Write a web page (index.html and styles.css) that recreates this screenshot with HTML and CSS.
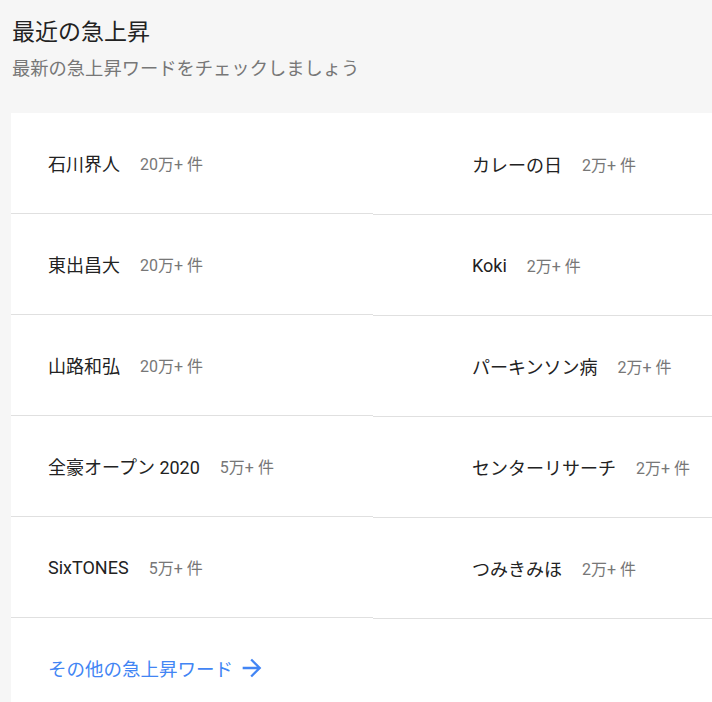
FILE: index.html
```html
<!DOCTYPE html>
<html lang="ja">
<head>
<meta charset="utf-8">
<title>最近の急上昇</title>
<link rel="stylesheet" href="styles.css">
</head>
<body>
<header class="header">
  <h1 class="title">最近の急上昇</h1>
  <p class="subtitle">最新の急上昇ワードをチェックしましょう</p>
</header>
<main class="card">
  <div class="col col-left">
    <div class="item"><span class="term">石川界人</span><span class="count">20万+ 件</span></div>
    <div class="item"><span class="term">東出昌大</span><span class="count">20万+ 件</span></div>
    <div class="item"><span class="term">山路和弘</span><span class="count">20万+ 件</span></div>
    <div class="item"><span class="term">全豪オープン 2020</span><span class="count">5万+ 件</span></div>
    <div class="item"><span class="term">SixTONES</span><span class="count">5万+ 件</span></div>
    <div class="more">
      <a class="more-link" href="#">その他の急上昇ワード
        <svg class="arrow" viewBox="0 0 24 24" width="28" height="28"><path d="M12 4l-1.41 1.41L16.17 11H4v2h12.17l-5.58 5.59L12 20l8-8z" fill="#4285f4"/></svg>
      </a>
    </div>
  </div>
  <div class="col col-right">
    <div class="item"><span class="term">カレーの日</span><span class="count">2万+ 件</span></div>
    <div class="item"><span class="term">Koki</span><span class="count">2万+ 件</span></div>
    <div class="item"><span class="term">パーキンソン病</span><span class="count">2万+ 件</span></div>
    <div class="item"><span class="term">センターリサーチ</span><span class="count">2万+ 件</span></div>
    <div class="item"><span class="term">つみきみほ</span><span class="count">2万+ 件</span></div>
  </div>
</main>
</body>
</html>
```

FILE: styles.css
```css
html, body {
  margin: 0;
  padding: 0;
  background: #f6f6f6;
  overflow: hidden;
  font-family: Roboto, "Noto Sans CJK JP", sans-serif;
}

.header {
  padding: 19px 12px 0 12px;
}

.title {
  margin: 0;
  font-size: 23px;
  line-height: 28px;
  font-weight: 400;
  color: #222;
}

.subtitle {
  margin: 10px 0 0 0;
  font-size: 18.3px;
  line-height: 24px;
  color: #777;
}

.card {
  margin: 32px 0 0 11px;
  background: #fff;
  display: grid;
  grid-template-columns: 362px 1fr;
  min-height: 600px;
}

.col {
  display: flex;
  flex-direction: column;
}

.col-right {
  padding-top: 1px;
}

.item {
  height: 100px;
  border-bottom: 1px solid #e0e0e0;
  display: flex;
  align-items: center;
  gap: 20px;
}

.col-left .item {
  padding-left: 37px;
}

.col-right .item {
  padding-left: 99px;
}

.term {
  font-size: 18px;
  color: #222;
}

.count {
  font-size: 16px;
  color: #777;
}

.more {
  height: 100px;
  display: flex;
  align-items: center;
  padding-left: 37px;
}

.more-link {
  display: flex;
  align-items: center;
  gap: 5px;
  font-size: 18.5px;
  color: #4285f4;
  text-decoration: none;
}

.arrow {
  display: block;
}
```
